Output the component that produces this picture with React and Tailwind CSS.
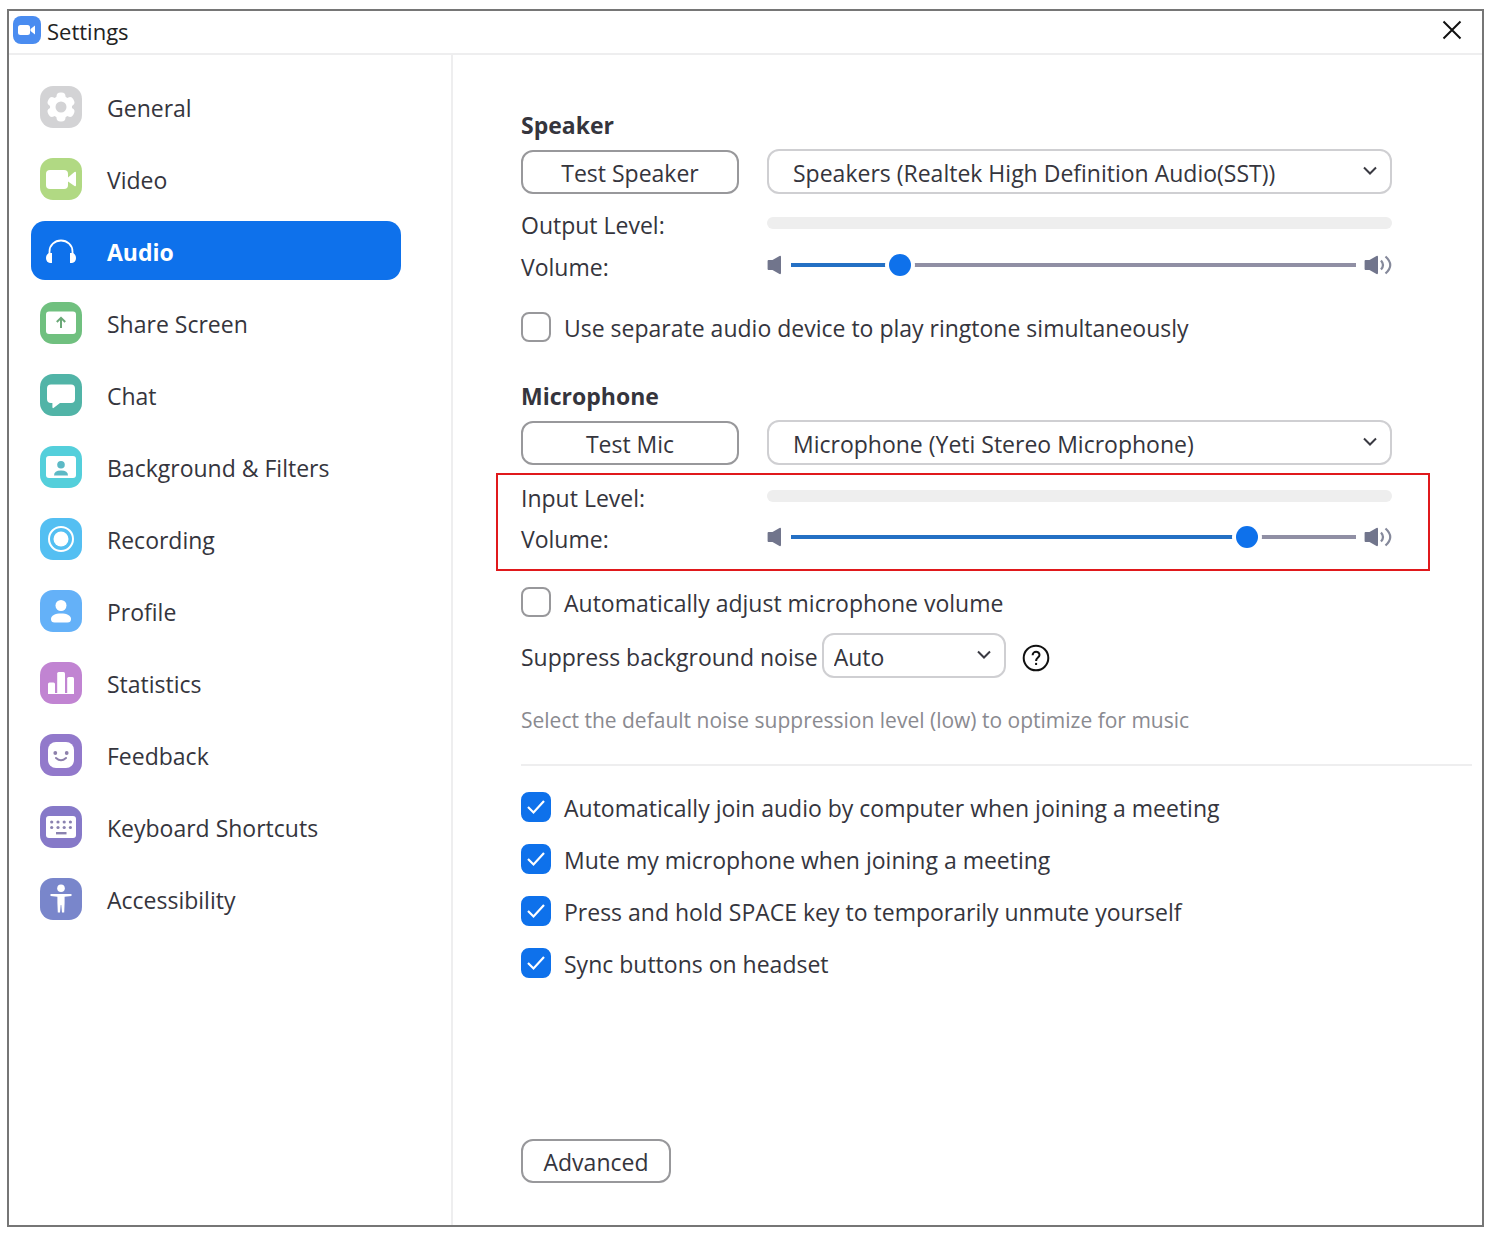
import React, { useState } from 'react';
import clsx from 'clsx';

const navItems = [
  {
    id: 'general',
    label: 'General',
    color: '#d3d3d5',
    icon: (
      <>
        <g fill="#fff">
          <circle cx="21" cy="21" r="11" />
          <rect x="16.5" y="6.5" width="9" height="29" rx="4" />
          <rect x="16.5" y="6.5" width="9" height="29" rx="4" transform="rotate(60 21 21)" />
          <rect x="16.5" y="6.5" width="9" height="29" rx="4" transform="rotate(120 21 21)" />
        </g>
        <circle cx="21" cy="21" r="5.5" fill="#d3d3d5" />
      </>
    ),
  },
  {
    id: 'video',
    label: 'Video',
    color: '#b1d983',
    icon: (
      <g fill="#fff">
        <rect x="6" y="12" width="22" height="19" rx="4" />
        <path d="M28 19.5L34.5 14Q36 13 36 15V27Q36 29 34.5 28L28 23.5Z" />
      </g>
    ),
  },
  {
    id: 'audio',
    label: 'Audio',
    color: 'none',
    icon: (
      <>
        <path d="M9.5 25V21.5A11.5 11 0 0 1 32.5 21.5V25" fill="none" stroke="#fff" strokeWidth="1.8" />
        <path d="M12 23H10A4 5 0 0 0 10 33H12Z" fill="#fff" />
        <path d="M30 23H32A4 5 0 0 1 32 33H30Z" fill="#fff" />
      </>
    ),
  },
  {
    id: 'share',
    label: 'Share Screen',
    color: '#70c07f',
    icon: (
      <>
        <rect x="6" y="9.5" width="30" height="22.5" rx="3" fill="#fff" />
        <path d="M21 26V16.5M16.8 20L21 15.8L25.2 20" fill="none" stroke="#6aa877" strokeWidth="2" />
      </>
    ),
  },
  {
    id: 'chat',
    label: 'Chat',
    color: '#51b4a7',
    icon: (
      <path
        d="M11 10.5H31Q35 10.5 35 14.5V25Q35 29 31 29H20L13.5 34Q12.4 34.6 12.4 33V29H11Q7 29 7 25V14.5Q7 10.5 11 10.5Z"
        fill="#fff"
      />
    ),
  },
  {
    id: 'background',
    label: 'Background & Filters',
    color: '#54cfdb',
    icon: (
      <>
        <rect x="6" y="10" width="30" height="22" rx="3" fill="#fff" />
        <circle cx="21" cy="18.7" r="3.8" fill="#5cb9c5" />
        <path d="M14 29.5Q14 24.5 21 24.5Q28 24.5 28 29.5Z" fill="#5cb9c5" />
      </>
    ),
  },
  {
    id: 'recording',
    label: 'Recording',
    color: '#54bff2',
    icon: (
      <>
        <circle cx="21" cy="21" r="12" fill="none" stroke="#fff" strokeWidth="2" />
        <circle cx="21" cy="21" r="7.5" fill="#fff" />
      </>
    ),
  },
  {
    id: 'profile',
    label: 'Profile',
    color: '#64b1f8',
    icon: (
      <g fill="#fff">
        <circle cx="21" cy="15.5" r="5.5" />
        <path d="M11 29C11 25.5 15 23.5 21 23.5C27 23.5 31 25.5 31 29Q31 32.5 27.5 32.5H14.5Q11 32.5 11 29Z" />
      </g>
    ),
  },
  {
    id: 'statistics',
    label: 'Statistics',
    color: '#c184d2',
    icon: (
      <g fill="#fff">
        <path d="M8 32V22Q8 20.5 9.5 20.5H13.5Q15 20.5 15 22V32Z" />
        <path d="M17.2 32V11.5Q17.2 10 18.7 10H23.5Q25 10 25 11.5V32Z" />
        <path d="M27.2 32V16.5Q27.2 15 28.7 15H32.5Q34 15 34 16.5V32Z" />
        <rect x="8" y="31" width="26" height="1" />
      </g>
    ),
  },
  {
    id: 'feedback',
    label: 'Feedback',
    color: '#9279cb',
    icon: (
      <>
        <rect x="8" y="8" width="26" height="26" rx="8" fill="#fff" />
        <circle cx="15.3" cy="19" r="1.9" fill="#8d80ab" />
        <circle cx="26.7" cy="19" r="1.9" fill="#8d80ab" />
        <path d="M16 24Q21 28.5 26 24" fill="none" stroke="#8d80ab" strokeWidth="2" strokeLinecap="round" />
      </>
    ),
  },
  {
    id: 'keyboard',
    label: 'Keyboard Shortcuts',
    color: '#8679c8',
    icon: (
      <>
        <rect x="6" y="10" width="30" height="22" rx="3" fill="#fff" />
        <g fill="#8a82b0">
          {[16, 21.5].map((y) => [11.7, 18, 24.2, 30.4].map((x) => <circle key={`${x}-${y}`} cx={x} cy={y} r="1.6" />))}
          <rect x="16" y="26" width="10.5" height="2.4" />
        </g>
      </>
    ),
  },
  {
    id: 'accessibility',
    label: 'Accessibility',
    color: '#7986cb',
    icon: (
      <g fill="#fff">
        <circle cx="21" cy="10.3" r="3.8" />
        <path d="M10.5 16H31.5V18L24.6 18.8V25L24.2 34.5H22L21.3 27H20.7L20 34.5H17.8L17.4 25V18.8L10.5 18Z" />
      </g>
    ),
  },
];

const joinOptions = [
  'Automatically join audio by computer when joining a meeting',
  'Mute my microphone when joining a meeting',
  'Press and hold SPACE key to temporarily unmute yourself',
  'Sync buttons on headset',
];

const SpeakerIcon = ({ loud }) => (
  <svg
    className={clsx('h-5 shrink-0', loud ? 'w-7' : 'w-4')}
    viewBox={loud ? '0 0 28 20' : '0 0 16 20'}
    aria-hidden="true"
  >
    <path d="M1.5 5H5.5L12.5 1Q14 .4 14 2V18Q14 19.6 12.5 19L5.5 15H1.5Q.6 15 .6 14V6Q.6 5 1.5 5Z" fill="#71758c" />
    {loud && (
      <g fill="none" stroke="#85899b" strokeWidth="2.2">
        <path d="M17 5.5Q21 10 17 14.5" />
        <path d="M21.5 1.5Q31 10 21.5 18.5" />
      </g>
    )}
  </svg>
);

const NavItem = ({ item, active, onSelect }) => (
  <button
    type="button"
    onClick={() => onSelect(item.id)}
    className={clsx(
      'flex h-[59px] w-full items-center gap-[25px] rounded-[14px] pl-[9px] text-left',
      active && 'bg-[#0e71eb] font-bold text-white'
    )}
  >
    <svg className="size-[42px] shrink-0" viewBox="0 0 42 42" aria-hidden="true">
      <rect width="42" height="42" rx="13" fill={item.color} />
      {item.icon}
    </svg>
    <span className="pt-0.5">{item.label}</span>
  </button>
);

const Select = ({ label, options, className, selectClassName }) => (
  <div className={clsx('relative', className)}>
    <select
      aria-label={label}
      className={clsx(
        'h-[45px] w-full appearance-none rounded-xl border-2 border-[#cfcfd2] bg-white pt-0.5 pr-12',
        selectClassName
      )}
    >
      {options.map((option) => (
        <option key={option}>{option}</option>
      ))}
    </select>
    <svg className="pointer-events-none absolute top-4 right-3.5 h-3 w-4" viewBox="0 0 16 12" aria-hidden="true">
      <path d="M2 2.5L8 8.5L14 2.5" fill="none" stroke="#3a3a42" strokeWidth="2" />
    </svg>
  </div>
);

const OutlineButton = ({ children, className }) => (
  <button type="button" className={clsx('h-11 rounded-xl border-2 border-[#98989b] bg-white pt-0.5', className)}>
    {children}
  </button>
);

const LevelRow = ({ label }) => (
  <div className="flex items-center">
    <span className="w-[246px] shrink-0 pt-1">{label}</span>
    <div className="h-3 flex-1 rounded-full bg-[#eeeeee]" />
  </div>
);

const VolumeRow = ({ id, initial }) => {
  const [value, setValue] = useState(initial);

  return (
    <div className="flex items-center">
      <label htmlFor={id} className="w-[246px] shrink-0 pt-1">
        Volume:
      </label>
      <div className="flex flex-1 items-center gap-2">
        <SpeakerIcon />
        <input
          id={id}
          type="range"
          value={value}
          onChange={(e) => setValue(Number(e.target.value))}
          style={{ background: `linear-gradient(to right, #2470c4 ${value}%, #908fa4 ${value}%)` }}
          className="h-1 min-w-0 flex-1 appearance-none [&::-webkit-slider-thumb]:size-[22px] [&::-webkit-slider-thumb]:appearance-none [&::-webkit-slider-thumb]:rounded-full [&::-webkit-slider-thumb]:bg-[#0e71eb] [&::-webkit-slider-thumb]:shadow-[0_0_0_4px_#fff]"
        />
        <SpeakerIcon loud />
      </div>
    </div>
  );
};

const Checkbox = ({ label, defaultChecked }) => (
  <label className="flex items-center gap-[13px]">
    <span className="grid shrink-0">
      <input
        type="checkbox"
        defaultChecked={defaultChecked}
        className="peer col-start-1 row-start-1 size-[30px] appearance-none rounded-lg border-2 border-[#98989b] bg-white checked:border-[#0e71eb] checked:bg-[#0e71eb]"
      />
      <svg
        className="pointer-events-none invisible col-start-1 row-start-1 size-[30px] peer-checked:visible"
        viewBox="0 0 30 30"
        aria-hidden="true"
      >
        <path d="M7 15L12.5 20.5L23 9" fill="none" stroke="#fff" strokeWidth="2.2" />
      </svg>
    </span>
    <span className="pt-0.5">{label}</span>
  </label>
);

const App = () => {
  const [active, setActive] = useState('audio');

  return (
    <div className="flex min-h-screen bg-white px-[7px] py-[9px] font-['Open_Sans','Noto_Sans',sans-serif] text-[23px] leading-8 text-[#35353d]">
      <div className="flex flex-1 flex-col border-2 border-[#767676]">
        <header className="flex h-11 items-center border-b-2 border-[#eeeeef] pr-5 pb-1 pl-1">
          <svg className="size-7" viewBox="0 0 28 28" aria-hidden="true">
            <rect width="28" height="28" rx="8" fill="#4a8cf0" />
            <rect x="5" y="9" width="12" height="10" rx="2.5" fill="#fff" />
            <path d="M17.5 13L22 9.5V18.5L17.5 15Z" fill="#fff" />
          </svg>
          <h1 className="flex-1 pt-0.5 pl-1.5 text-[22px] text-[#222]">Settings</h1>
          <button type="button" aria-label="Close">
            <svg className="size-5" viewBox="0 0 20 20" aria-hidden="true">
              <path d="M1.5 1.5L18.5 18.5M18.5 1.5L1.5 18.5" stroke="#111" strokeWidth="2" />
            </svg>
          </button>
        </header>

        <div className="flex flex-1">
          <nav className="flex w-[444px] shrink-0 flex-col gap-[13px] border-r-2 border-[#eeeeef] pt-[22px] pr-[50px] pl-[22px]">
            {navItems.map((item) => (
              <NavItem key={item.id} item={item} active={item.id === active} onSelect={setActive} />
            ))}
          </nav>

          <main className="flex min-w-0 flex-1 flex-col pt-[54px] pr-2.5 pb-[42px] pl-[68px]">
            <section className="pr-20">
              <h2 className="font-bold">Speaker</h2>
              <div className="mt-2 flex items-center gap-7">
                <OutlineButton className="w-[218px]">Test Speaker</OutlineButton>
                <Select
                  label="Speaker"
                  options={['Speakers (Realtek High Definition Audio(SST))']}
                  className="flex-1"
                  selectClassName="pl-6"
                />
              </div>
              <div className="mt-[11px] flex flex-col gap-1.5">
                <LevelRow label="Output Level:" />
                <VolumeRow id="speaker-volume" initial={18} />
              </div>
              <div className="mt-[27px]">
                <Checkbox label="Use separate audio device to play ringtone simultaneously" />
              </div>
            </section>

            <section className="mt-9 pr-20">
              <h2 className="font-bold">Microphone</h2>
              <div className="mt-2 flex items-center gap-7">
                <OutlineButton className="w-[218px]">Test Mic</OutlineButton>
                <Select
                  label="Microphone"
                  options={['Microphone (Yeti Stereo Microphone)']}
                  className="flex-1"
                  selectClassName="pl-6"
                />
              </div>
              <div className="mt-2 -mr-[38px] -ml-[25px] flex flex-col gap-[5px] border-2 border-[#e0191c] pt-[3px] pr-9 pb-3.5 pl-[23px]">
                <LevelRow label="Input Level:" />
                <VolumeRow id="mic-volume" initial={82} />
              </div>
              <div className="mt-[14px]">
                <Checkbox label="Automatically adjust microphone volume" />
              </div>
              <div className="mt-[14px] flex items-center">
                <span className="pt-0.5">Suppress background noise</span>
                <Select
                  label="Suppress background noise"
                  options={['Auto', 'Low', 'Medium', 'High']}
                  className="ml-1 w-[184px]"
                  selectClassName="pl-2.5"
                />
                <button type="button" aria-label="Help" className="ml-4 pt-1">
                  <svg className="size-7" viewBox="0 0 28 28" fill="none" stroke="#111" strokeWidth="2" aria-hidden="true">
                    <circle cx="14" cy="14" r="12.3" />
                    <path d="M10.6 11.2C10.6 6.6 17.6 6.8 17.5 11C17.4 13.6 14.1 13.6 14.1 17" />
                    <path d="M14.1 18.9V21" />
                  </svg>
                </button>
              </div>
              <p className="mt-[26px] text-[21px] text-[#8a8a90]">
                Select the default noise suppression level (low) to optimize for music
              </p>
            </section>

            <hr className="mt-7 border-t-2 border-[#eeeeef]" />

            <section className="mt-6 flex flex-col gap-[18px] pr-20">
              {joinOptions.map((label) => (
                <Checkbox key={label} label={label} defaultChecked />
              ))}
            </section>

            <OutlineButton className="mt-auto w-[150px]">Advanced</OutlineButton>
          </main>
        </div>
      </div>
    </div>
  );
};

export default App;
